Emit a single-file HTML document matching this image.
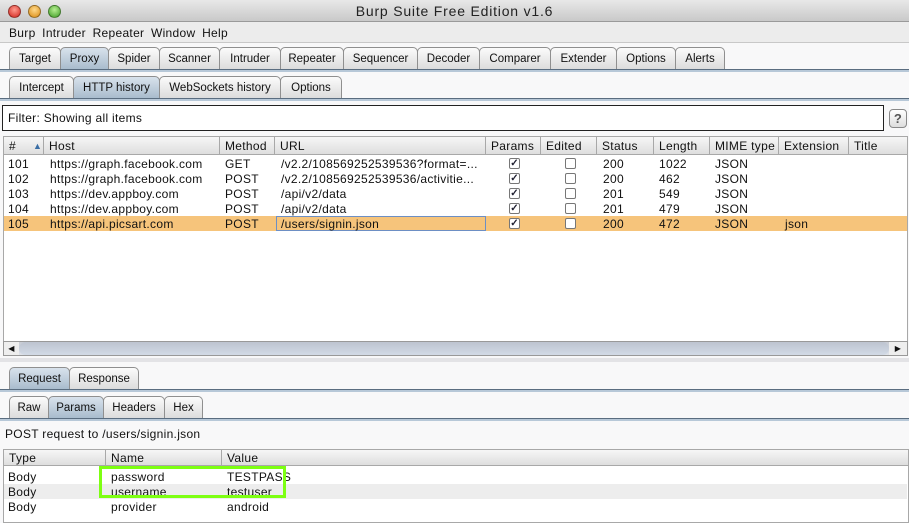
<!DOCTYPE html>
<html><head><meta charset="utf-8"><style>
*{margin:0;padding:0;box-sizing:border-box}
body{width:909px;height:523px;overflow:hidden;background:#f8f8f9;font-family:"Liberation Sans",sans-serif;font-size:12px;letter-spacing:0.3px;color:#111;position:relative}
.a{position:absolute;white-space:nowrap}
.title{left:0;top:0;width:909px;height:22px;background:linear-gradient(#e8e8e8,#c9c9c9);border-bottom:1px solid #9a9a9a;text-align:center;line-height:23px;font-size:14px;letter-spacing:0.8px;color:#222}
.dot{position:absolute;top:5px;width:13px;height:13px;border-radius:50%;border:1px solid rgba(0,0,0,.35)}
.menu{left:0;top:22px;width:909px;height:21px;background:#ececec;border-bottom:1px solid #c8c8c8;line-height:22px;padding-left:9px;font-size:12px;word-spacing:3px}
.tab{position:absolute;height:22px;border:1px solid #8f8f8f;border-bottom:none;border-radius:5px 5px 0 0;background:linear-gradient(#fbfbfb,#dcdcdc);text-align:center;line-height:22px;font-size:11.5px;letter-spacing:0}
.tab.s{background:linear-gradient(#d8e2ec,#a9bccd)}
.line{position:absolute;left:0;width:909px;height:3px;background:#b7c8d8;border-top:1px solid #5a6d80}
.hdr{position:absolute;height:19px;background:linear-gradient(#f6f6f6,#dedede);border:1px solid #a8a8a8;border-left:none;line-height:18px;padding-left:5px}
.row{position:absolute;left:4px;width:903px;height:15px;line-height:16px}
.c{position:absolute;top:0}
.cb{position:absolute;top:2px;width:11px;height:11px;border:1px solid #777;border-radius:2px;background:#fff;font-size:10px;line-height:9px;text-align:center;font-weight:bold;color:#223;letter-spacing:0}
</style></head><body>
<div class="a title">Burp Suite Free Edition v1.6</div>
<div class="dot" style="left:8px;background:radial-gradient(circle at 50% 35%,#ff9a8e,#d1231b)"></div>
<div class="dot" style="left:28px;background:radial-gradient(circle at 50% 35%,#ffd98a,#d98a12)"></div>
<div class="dot" style="left:48px;background:radial-gradient(circle at 50% 35%,#b7ef92,#3d9c23)"></div>
<div class="a menu">Burp Intruder Repeater Window Help</div>

<div class="tab" style="left:9px;top:47px;width:52px">Target</div>
<div class="tab s" style="left:60px;top:47px;width:49px">Proxy</div>
<div class="tab" style="left:108px;top:47px;width:52px">Spider</div>
<div class="tab" style="left:159px;top:47px;width:61px">Scanner</div>
<div class="tab" style="left:219px;top:47px;width:62px">Intruder</div>
<div class="tab" style="left:280px;top:47px;width:64px">Repeater</div>
<div class="tab" style="left:343px;top:47px;width:75px">Sequencer</div>
<div class="tab" style="left:417px;top:47px;width:63px">Decoder</div>
<div class="tab" style="left:479px;top:47px;width:72px">Comparer</div>
<div class="tab" style="left:550px;top:47px;width:67px">Extender</div>
<div class="tab" style="left:616px;top:47px;width:60px">Options</div>
<div class="tab" style="left:675px;top:47px;width:50px">Alerts</div>
<div class="line" style="top:69px"></div>

<div class="tab" style="left:9px;top:76px;width:65px">Intercept</div>
<div class="tab s" style="left:73px;top:76px;width:87px">HTTP history</div>
<div class="tab" style="left:159px;top:76px;width:122px">WebSockets history</div>
<div class="tab" style="left:280px;top:76px;width:62px">Options</div>
<div class="line" style="top:98px"></div>

<div class="a" style="left:2px;top:105px;width:882px;height:26px;border:1px solid #222;background:#fff;line-height:25px;padding-left:5px">Filter: Showing all items</div>
<div class="a" style="left:889px;top:109px;width:18px;height:19px;border:1px solid #888;border-radius:4px;background:linear-gradient(#fff,#ddd);text-align:center;line-height:17px;font-size:13px;font-weight:bold;color:#555">?</div>

<div class="a" style="left:3px;top:136px;width:905px;height:220px;background:#fff;border:1px solid #a8a8a8"></div>
<div class="hdr" style="left:3px;top:136px;width:41px;border-left:1px solid #a8a8a8">#<span style="position:absolute;left:29px;color:#3a6ea5;font-size:9px">▲</span></div>
<div class="hdr" style="left:44px;top:136px;width:176px">Host</div>
<div class="hdr" style="left:220px;top:136px;width:55px">Method</div>
<div class="hdr" style="left:275px;top:136px;width:211px">URL</div>
<div class="hdr" style="left:486px;top:136px;width:55px">Params</div>
<div class="hdr" style="left:541px;top:136px;width:56px">Edited</div>
<div class="hdr" style="left:597px;top:136px;width:57px">Status</div>
<div class="hdr" style="left:654px;top:136px;width:56px">Length</div>
<div class="hdr" style="left:710px;top:136px;width:69px">MIME type</div>
<div class="hdr" style="left:779px;top:136px;width:70px">Extension</div>
<div class="hdr" style="left:849px;top:136px;width:59px">Title</div>

<div class="row" style="top:156px"><span class="c" style="left:4px">101</span><span class="c" style="left:46px">https://graph.facebook.com</span><span class="c" style="left:221px">GET</span><span class="c" style="left:277px">/v2.2/108569252539536?format=...</span><span class="cb" style="left:505px">✓</span><span class="cb" style="left:561px"></span><span class="c" style="left:599px">200</span><span class="c" style="left:655px">1022</span><span class="c" style="left:711px">JSON</span></div>
<div class="row" style="top:171px"><span class="c" style="left:4px">102</span><span class="c" style="left:46px">https://graph.facebook.com</span><span class="c" style="left:221px">POST</span><span class="c" style="left:277px">/v2.2/108569252539536/activitie...</span><span class="cb" style="left:505px">✓</span><span class="cb" style="left:561px"></span><span class="c" style="left:599px">200</span><span class="c" style="left:655px">462</span><span class="c" style="left:711px">JSON</span></div>
<div class="row" style="top:186px"><span class="c" style="left:4px">103</span><span class="c" style="left:46px">https://dev.appboy.com</span><span class="c" style="left:221px">POST</span><span class="c" style="left:277px">/api/v2/data</span><span class="cb" style="left:505px">✓</span><span class="cb" style="left:561px"></span><span class="c" style="left:599px">201</span><span class="c" style="left:655px">549</span><span class="c" style="left:711px">JSON</span></div>
<div class="row" style="top:201px"><span class="c" style="left:4px">104</span><span class="c" style="left:46px">https://dev.appboy.com</span><span class="c" style="left:221px">POST</span><span class="c" style="left:277px">/api/v2/data</span><span class="cb" style="left:505px">✓</span><span class="cb" style="left:561px"></span><span class="c" style="left:599px">201</span><span class="c" style="left:655px">479</span><span class="c" style="left:711px">JSON</span></div>
<div class="row" style="top:216px;background:#f6c47b"><span class="c" style="left:4px">105</span><span class="c" style="left:46px">https://api.picsart.com</span><span class="c" style="left:221px">POST</span><span class="c" style="left:272px;top:0;width:210px;height:15px;border:1px solid #6d8fc4;padding-left:4px;line-height:14px">/users/signin.json</span><span class="cb" style="left:505px">✓</span><span class="cb" style="left:561px"></span><span class="c" style="left:599px">200</span><span class="c" style="left:655px">472</span><span class="c" style="left:711px">JSON</span><span class="c" style="left:781px">json</span></div>

<div class="a" style="left:3px;top:341px;width:905px;height:15px;background:linear-gradient(#c7cbd3,#dfe3ea);border:1px solid #999"></div>
<div class="a" style="left:4px;top:342px;width:15px;height:13px;background:#eee;font-size:8px;line-height:13px;text-align:center">◀</div>
<div class="a" style="left:19px;top:342px;width:870px;height:13px;border-radius:7px;background:linear-gradient(#bdc4d0,#d2dae6)"></div>
<div class="a" style="left:889px;top:342px;width:18px;height:13px;background:#eee;font-size:8px;line-height:13px;text-align:center">▶</div>
<div class="a" style="left:0;top:358px;width:909px;height:4px;background:#e3e3e6"></div>

<div class="tab s" style="left:9px;top:367px;width:61px">Request</div>
<div class="tab" style="left:69px;top:367px;width:70px">Response</div>
<div class="line" style="top:389px"></div>
<div class="tab" style="left:9px;top:396px;width:40px">Raw</div>
<div class="tab s" style="left:48px;top:396px;width:56px">Params</div>
<div class="tab" style="left:103px;top:396px;width:62px">Headers</div>
<div class="tab" style="left:164px;top:396px;width:39px">Hex</div>
<div class="line" style="top:418px"></div>

<div class="a" style="left:5px;top:427px;font-size:12px">POST request to /users/signin.json</div>
<div class="a" style="left:3px;top:449px;width:906px;height:74px;background:#fff;border:1px solid #a8a8a8"></div>
<div class="hdr" style="left:3px;top:449px;width:103px;height:17px;line-height:16px;border-left:1px solid #a8a8a8">Type</div>
<div class="hdr" style="left:106px;top:449px;width:116px;height:17px;line-height:16px">Name</div>
<div class="hdr" style="left:222px;top:449px;width:687px;height:17px;line-height:16px">Value</div>
<div class="row" style="top:469px"><span class="c" style="left:4px">Body</span><span class="c" style="left:107px">password</span><span class="c" style="left:223px">TESTPASS</span></div>
<div class="row" style="top:484px;background:#ededed"><span class="c" style="left:4px">Body</span><span class="c" style="left:107px">username</span><span class="c" style="left:223px">testuser</span></div>
<div class="row" style="top:499px"><span class="c" style="left:4px">Body</span><span class="c" style="left:107px">provider</span><span class="c" style="left:223px">android</span></div>
<div class="a" style="left:99px;top:466px;width:187px;height:32px;border:3px solid #7dff12"></div>
</body></html>
